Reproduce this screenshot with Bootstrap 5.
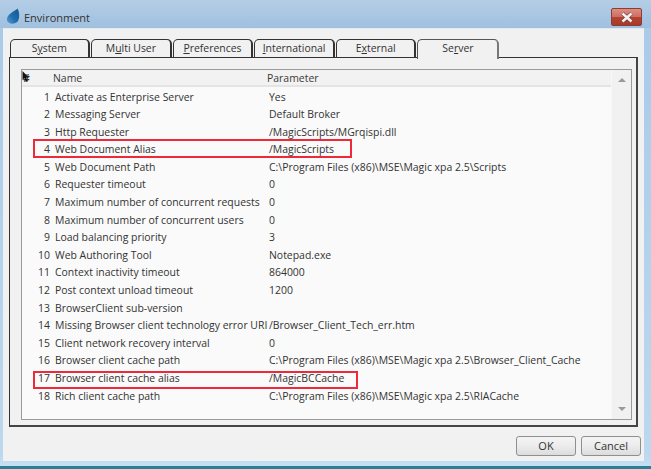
<!DOCTYPE html>
<html lang="en">
<head>
<meta charset="utf-8">
<title>Environment</title>
<link rel="stylesheet" href="https://cdn.jsdelivr.net/npm/bootstrap@5.3.0/dist/css/bootstrap.min.css">
<style>
html,body{margin:0;height:469px;overflow:hidden;background:#fff}
body{font-family:"Open Sans","Liberation Sans",sans-serif;font-size:10.45px;color:#333;line-height:1}
.win{width:651px;height:469px;background:linear-gradient(#b5cee6,#9fc0df 28px,#a9cbe8 28px,#bcd8ef 455px,#c4def2 464px);border-bottom:3px solid #2b7f94;padding:0 7px 0 3px}
.titlebar{height:28px;padding-left:3px;font-size:11px;color:#333}
.closebtn{width:31px;height:18px;margin:8px 2px 0 auto;background:linear-gradient(#dc8d82,#cf6f62 48%,#b2432f 52%,#a83a2b);border:1px solid #8d3b33;border-radius:2px;align-self:flex-start}
.titletext{padding-top:6px}
.client{height:433px;background:#f1f1f1;padding:10px 6px 0 6px;border-top:1px solid #e2e9ef}
.tabstrip{height:18px;padding-left:.5px;gap:1px}
.tabitem{width:80.6px;height:18px;border:1px solid #333;border-right:2px solid #333;border-bottom:0;border-radius:5px 5px 0 0;background:#f1f1f1;color:#333;text-align:center;padding-top:3px}
.tabitem.sel{width:82px;height:20px;border-color:#555;border-right:2px solid #777;position:relative;z-index:2}
.tabpanel{width:629px;height:370px;border:1px solid #333;border-right:2px solid #444;border-bottom:2px solid #444;padding:11px 4px 6px 11px;background:#f1f1f1}
.listbox{height:351px;border:1px solid #9a9a9a;background:#fafafa}
.gridarea{flex:1;min-width:0}
.headrow{height:17px;background:#f2f2f2;border-bottom:2px solid #e4e4e4;padding-top:3px;color:#3a3a3a;position:relative}
.datarow{height:17.6px;padding-top:4.5px}
.numcell{width:28px;text-align:right;flex:none}
.hashcell{width:9px;flex:none;padding-left:1px;font-weight:700;color:#333}
.namecell{width:219px;flex:none;padding-left:5px;white-space:nowrap}
.headname{width:236px;flex:none;padding-left:22px}
.paramcell{white-space:nowrap}
.redbox{position:absolute;left:11px;border:2px solid #ee2a3a}
.redbox.first{top:-1px;height:19px;width:319px}
.redbox.second{top:2px;height:18px;width:325px}
.pointer{position:absolute;left:0;top:1px}
.vscroll{width:20px;flex:none;background:#f1f1f1;border-left:1px solid #f7f7f7}
.arrowup,.arrowdn{width:0;height:0;border-left:4px solid transparent;border-right:4px solid transparent}
.arrowup{border-bottom:4px solid #9a9a9a}
.arrowdn{border-top:4px solid #9a9a9a}
.actionbar{padding:9px 0 0 0;margin-right:-3px;gap:5px}
.dlgbtn{width:60px;height:20px;border:1px solid #8f8f8f;border-radius:3px;background:linear-gradient(#f4f4f4,#ececec 50%,#dcdcdc);font-size:11px;color:#333;padding:0;line-height:18px}
.logoicon{flex:none;margin:3px 4px 0 0}
</style>
</head>
<body>
<div class="win d-flex flex-column">
  <div class="titlebar d-flex align-items-center">
    <svg class="logoicon" width="14" height="16" viewBox="0 0 14 16"><defs><linearGradient id="dropfill" x1="1" y1="0" x2="0" y2="1"><stop offset="0" stop-color="#14588f"/><stop offset=".55" stop-color="#1f6eae"/><stop offset="1" stop-color="#5c9ed4"/></linearGradient></defs><path d="M11.500 0.500 C13 3 13.500 7 13 10 C12.500 13 11 15 8 15.500 C5 16 1.500 15 1 12.500 C0.500 10 2 7.500 4.500 5.500 C7 3.500 10 2 11.500 0.500Z" fill="url(#dropfill)"/></svg>
    <span class="titletext">Environment</span>
    <div class="closebtn d-flex align-items-center justify-content-center">
      <svg width="14" height="11" viewBox="0 0 14 11"><path d="M2.500 1.500 L11.500 9.500 M11.500 1.500 L2.500 9.500" stroke="#7a3a35" stroke-width="3.800"/><path d="M2.500 1.500 L11.500 9.500 M11.500 1.500 L2.500 9.500" stroke="#f2f2f2" stroke-width="2.600"/></svg>
    </div>
  </div>
  <div class="client">
    <div class="tabstrip d-flex">
      <div class="tabitem">S<u>y</u>stem</div>
      <div class="tabitem">M<u>u</u>lti User</div>
      <div class="tabitem"><u>P</u>references</div>
      <div class="tabitem"><u>I</u>nternational</div>
      <div class="tabitem">E<u>x</u>ternal</div>
      <div class="tabitem sel">Se<u>r</u>ver</div>
    </div>
    <div class="tabpanel">
      <div class="listbox d-flex">
        <div class="gridarea">
          <div class="headrow d-flex">
            <div class="hashcell">#</div>
            <div class="headname">Name</div>
            <div>Parameter</div>
            <svg class="pointer" width="7" height="11" viewBox="0 0 7 11"><path d="M0.500 0 L0.500 9 L2.500 7 L4 10.500 L5.500 10 L4 6.500 L6.500 6.500Z" fill="#111"/></svg>
          </div>
          <div class="datarow d-flex"><div class="numcell">1</div><div class="namecell">Activate as Enterprise Server</div><div class="paramcell">Yes</div></div>
          <div class="datarow d-flex"><div class="numcell">2</div><div class="namecell">Messaging Server</div><div class="paramcell">Default Broker</div></div>
          <div class="datarow d-flex"><div class="numcell">3</div><div class="namecell">Http Requester</div><div class="paramcell">/MagicScripts/MGrqispi.dll</div></div>
          <div class="datarow d-flex position-relative"><div class="numcell">4</div><div class="namecell">Web Document Alias</div><div class="paramcell">/MagicScripts</div><div class="redbox first"></div></div>
          <div class="datarow d-flex"><div class="numcell">5</div><div class="namecell">Web Document Path</div><div class="paramcell">C:\Program Files (x86)\MSE\Magic xpa 2.5\Scripts</div></div>
          <div class="datarow d-flex"><div class="numcell">6</div><div class="namecell">Requester timeout</div><div class="paramcell">0</div></div>
          <div class="datarow d-flex"><div class="numcell">7</div><div class="namecell">Maximum number of concurrent requests</div><div class="paramcell">0</div></div>
          <div class="datarow d-flex"><div class="numcell">8</div><div class="namecell">Maximum number of concurrent users</div><div class="paramcell">0</div></div>
          <div class="datarow d-flex"><div class="numcell">9</div><div class="namecell">Load balancing priority</div><div class="paramcell">3</div></div>
          <div class="datarow d-flex"><div class="numcell">10</div><div class="namecell">Web Authoring Tool</div><div class="paramcell">Notepad.exe</div></div>
          <div class="datarow d-flex"><div class="numcell">11</div><div class="namecell">Context inactivity timeout</div><div class="paramcell">864000</div></div>
          <div class="datarow d-flex"><div class="numcell">12</div><div class="namecell">Post context unload timeout</div><div class="paramcell">1200</div></div>
          <div class="datarow d-flex"><div class="numcell">13</div><div class="namecell">BrowserClient sub-version</div><div class="paramcell"></div></div>
          <div class="datarow d-flex"><div class="numcell">14</div><div class="namecell">Missing Browser client technology error URI</div><div class="paramcell">/Browser_Client_Tech_err.htm</div></div>
          <div class="datarow d-flex"><div class="numcell">15</div><div class="namecell">Client network recovery interval</div><div class="paramcell">0</div></div>
          <div class="datarow d-flex"><div class="numcell">16</div><div class="namecell">Browser client cache path</div><div class="paramcell">C:\Program Files (x86)\MSE\Magic xpa 2.5\Browser_Client_Cache</div></div>
          <div class="datarow d-flex position-relative"><div class="numcell">17</div><div class="namecell">Browser client cache alias</div><div class="paramcell">/MagicBCCache</div><div class="redbox second"></div></div>
          <div class="datarow d-flex"><div class="numcell">18</div><div class="namecell">Rich client cache path</div><div class="paramcell">C:\Program Files (x86)\MSE\Magic xpa 2.5\RIACache</div></div>
        </div>
        <div class="vscroll d-flex flex-column align-items-center justify-content-between py-1">
          <div class="arrowup mt-1"></div>
          <div class="arrowdn mb-1"></div>
        </div>
      </div>
    </div>
    <div class="actionbar d-flex justify-content-end">
      <button type="button" class="btn dlgbtn">OK</button>
      <button type="button" class="btn dlgbtn">Cancel</button>
    </div>
  </div>
</div>
<script src="https://cdn.jsdelivr.net/npm/bootstrap@5.3.0/dist/js/bootstrap.bundle.min.js"></script>
</body>
</html>
